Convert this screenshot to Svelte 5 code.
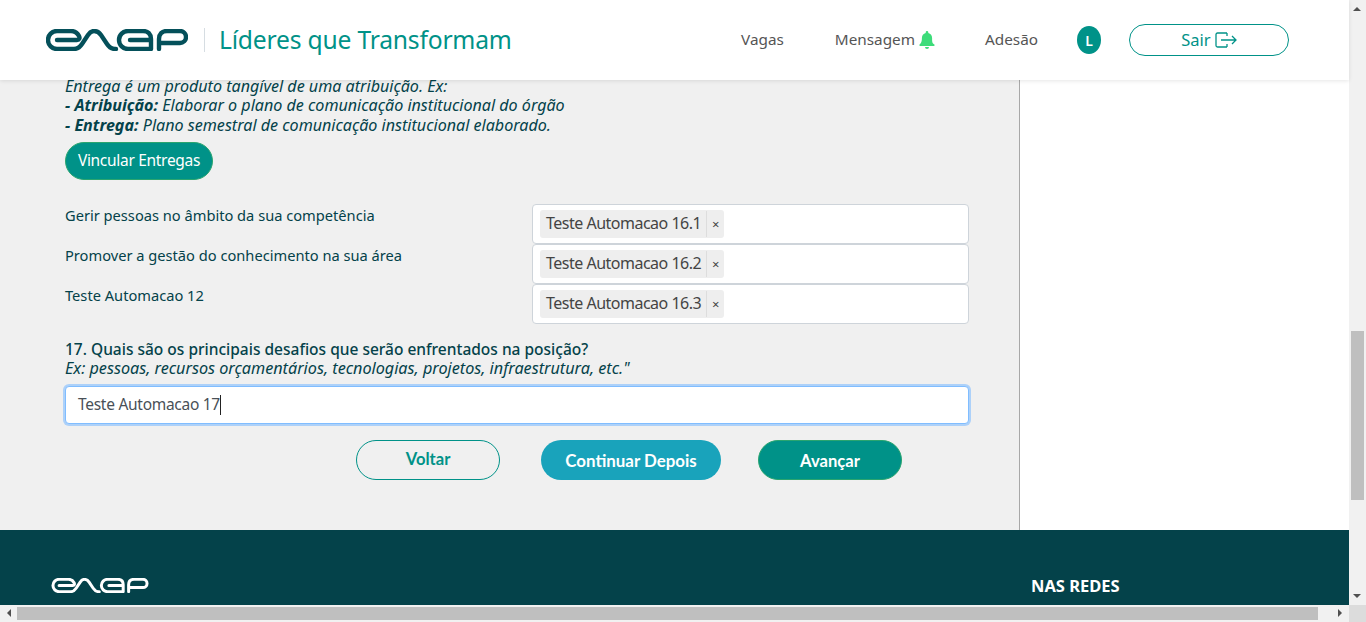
<script>
  const rows = [
    { label: 'Gerir pessoas no âmbito da sua competência', tag: 'Teste Automacao 16.1' },
    { label: 'Promover a gestão do conhecimento na sua área', tag: 'Teste Automacao 16.2' },
    { label: 'Teste Automacao 12', tag: 'Teste Automacao 16.3' }
  ];
</script>

{#snippet logo(cls)}
  <svg class={cls} viewBox="0 0 142 22" fill="none" stroke="currentColor" stroke-width="4.4" stroke-linecap="round" stroke-linejoin="round" aria-label="enap">
    <path d="M11 11H31c2.500 0 3-2 2-4c-1.500-3-4-5-8-5H11a9 9 0 0 0 0 18H28c4 0 6-2 8-5l6-9c2-3 3-4 6-4s5 1 7 4l6 9c2 3 4 5 8 5h1" />
    <path d="M84 11H104M105 20H82a9 9 0 0 1 0-18H97c5 0 8 3 8 8v10" />
    <path d="M113 20v-10c0-5 3-8 8-8H134a6 6 0 0 1 0 12H115" />
  </svg>
{/snippet}

<div class="page">
  <header class="topbar">
    <div class="brand">
      {@render logo('logo')}
      <span class="divider"></span>
      <span class="title">Líderes que Transformam</span>
    </div>
    <nav class="nav">
      <span class="nav-item vagas">Vagas</span>
      <span class="nav-item mensagem"><span class="shift">Mensagem</span>
        <svg class="bell" viewBox="0 0 16 18" aria-hidden="true"><path d="M8 0a1.3 1.3 0 0 0-1.3 1.3v.6C4.3 2.500 2.900 4.500 2.900 7c0 4-1 5.300-2.300 6.600-.5.5-.2 1.400.6 1.400h13.600c.8 0 1.100-.9.6-1.400C13.100 12.300 13.100 11 13.100 7c0-2.500-1.400-4.500-3.800-5.100v-.6A1.300 1.300 0 0 0 8 0zM6 16a2 2 0 0 0 4 0z" /></svg>
      </span>
      <span class="nav-item adesao">Adesão</span>
      <span class="avatar">L</span>
      <span class="exit"><span class="shift">Sair</span>
        <svg class="exit-icon" viewBox="0 0 22 16" aria-hidden="true"><path d="M12 1H2.500A1.500 1.500 0 0 0 1 2.500v11A1.500 1.500 0 0 0 2.500 15H12M12 1v3M12 15v-3M6 8h15M17 4l4 4-4 4" /></svg>
      </span>
    </nav>
  </header>

  <div class="body-row">
    <main class="content">
      <p class="hint">Entrega é um produto tangível de uma atribuição. Ex:<br />
        <b>- Atribuição:</b> Elaborar o plano de comunicação institucional do órgão<br />
        <b>- Entrega:</b> Plano semestral de comunicação institucional elaborado.</p>
      <button class="link-btn">Vincular Entregas</button>

      <div class="rows">
        {#each rows as r}
          <div class="row">
            <span class="row-label">{r.label}</span>
            <div class="select">
              <span class="chip"><span class="chip-text">{r.tag}</span><span class="chip-x">×</span></span>
            </div>
          </div>
        {/each}
      </div>

      <p class="question">17. Quais são os principais desafios que serão enfrentados na posição?</p>
      <p class="example">Ex: pessoas, recursos orçamentários, tecnologias, projetos, infraestrutura, etc."</p>
      <div class="answer"><span>Teste Automacao 17</span><span class="caret"></span></div>

      <div class="actions">
        <button class="act back">Voltar</button>
        <button class="act later">Continuar Depois</button>
        <button class="act next">Avançar</button>
      </div>
    </main>
    <aside class="side"></aside>
  </div>

  <footer class="footer">
    {@render logo('logo-small')}
    <span class="socials">NAS REDES</span>
  </footer>

  <div class="vscroll">
    <span class="arrow up"></span>
    <span class="vthumb"></span>
    <span class="arrow down"></span>
  </div>
  <div class="hscroll">
    <span class="arrow left"></span>
    <span class="hthumb"></span>
    <span class="arrow right"></span>
  </div>
  <div class="corner"></div>
</div>

<style>
  :global(body) { margin: 0; background: #fff; overflow: hidden; }
  .page {
    position: relative;
    width: 1366px;
    height: 622px;
    overflow: hidden;
    font-family: "Noto Sans", sans-serif;
    color: #04424a;
    --teal: #009288;
  }
  p { margin: 0; }
  button { font-family: inherit; cursor: pointer; }

  .topbar {
    position: absolute;
    top: 0; left: 0;
    width: 1349px;
    height: 80px;
    box-sizing: border-box;
    padding: 0 60px 0 46px;
    background: #fff;
    box-shadow: 0 1px 4px rgba(0,0,0,.1);
    display: flex;
    align-items: center;
    justify-content: space-between;
    z-index: 2;
  }
  .brand { display: flex; align-items: center; }
  .logo { width: 142px; height: 22px; color: #04505a; }
  .divider { width: 1px; height: 24px; background: #d6dde2; margin: 0 14px 0 16px; }
  .title { font-size: 24.65px; color: var(--teal); letter-spacing: -.2px; margin-bottom: 2px; }
  .nav { display: flex; align-items: center; color: #555; font-size: 15.3px; }
  .nav-item { white-space: nowrap; }
  .vagas, .adesao, .shift { margin-bottom: 2px; }
  .mensagem { margin-left: 51px; display: flex; align-items: center; gap: 4px; }
  .adesao { margin-left: 50px; }
  .bell { width: 16px; height: 18px; fill: #3ddc7a; }
  .avatar {
    width: 24px; height: 28px;
    margin-left: 39px;
    border-radius: 50%;
    background: var(--teal);
    color: #fff;
    font-size: 14px;
    font-weight: 600;
    display: flex; align-items: center; justify-content: center;
  }
  .exit {
    margin-left: 28px;
    width: 160px; height: 32px;
    box-sizing: border-box;
    border: 1px solid var(--teal);
    border-radius: 16px;
    color: var(--teal);
    font-size: 16.5px;
    display: flex; align-items: center; justify-content: center; gap: 4px;
  }
  .exit-icon { width: 22px; height: 16px; fill: none; stroke: var(--teal); stroke-width: 1.3; }

  .body-row { display: flex; height: 530px; }
  .content {
    box-sizing: border-box;
    padding: 76.5px 50px 0 65px;
    background: #f0f0f0;
    border-right: 1px solid #a8a8a8;
    width: 1020px;
  }
  .side { flex: 1; background: #fff; }

  .hint { font-size: 16.1px; line-height: 19.5px; font-style: italic; }
  .hint b { font-weight: 700; }
  .link-btn {
    display: block;
    margin-top: 7px;
    width: 148px; height: 38px;
    padding: 0 0 2px;
    border: 1px solid #2aa56f;
    border-radius: 19px;
    background: var(--teal);
    color: #fff;
    font-size: 15.5px;
    letter-spacing: -.3px;
  }
  .rows { margin-top: 24px; width: 904px; }
  .row { display: flex; height: 40px; }
  .row-label { width: 467px; font-size: 14.65px; line-height: 22px; }
  .select {
    flex: 1;
    box-sizing: border-box;
    background: #fff;
    border: 1px solid #ced4da;
    border-radius: 4px;
    padding: 5px 7px;
  }
  .chip {
    display: inline-flex;
    align-items: center;
    height: 28px;
    background: #eee;
    border-radius: 3px;
    color: #444;
  }
  .chip-text { font-size: 16px; letter-spacing: -.5px; padding: 0 5px 0 6px; height: 28px; line-height: 27px; }
  .chip-x { font-size: 13px; width: 17px; text-align: center; line-height: 26px; border-left: 1px solid #ddd; }

  .question { margin-top: 15.5px; font-size: 15.5px; line-height: 19.5px; font-weight: 500; }
  .example { font-size: 16.2px; line-height: 19.5px; font-style: italic; }
  .answer {
    margin-top: 7.5px;
    width: 904px; height: 38px;
    box-sizing: border-box;
    background: #fff;
    border: 1px solid #80bdff;
    border-radius: 4px;
    box-shadow: 0 0 0 2px rgba(128,189,255,.6);
    padding: 0 12px 2px;
    display: flex; align-items: center;
    font-size: 15.5px;
    letter-spacing: -.28px;
    color: #495057;
  }
  .caret { width: 1px; height: 20px; background: #222; margin-top: 2px; }

  .actions { display: flex; margin: 16px 0 0 291px; }
  .act {
    height: 40px;
    padding: 0;
    border-radius: 20px;
    font-family: Lato, sans-serif;
    font-size: 16.6px;
    font-weight: 700;
  }
  .back { width: 144px; background: transparent; border: 1px solid var(--teal); color: var(--teal); padding-bottom: 2px; }
  .later { width: 180px; margin-left: 41px; background: #19a3bb; border: 0; color: #fff; font-size: 16.9px; padding-top: 1px; }
  .next { width: 144px; margin-left: 37px; background: var(--teal); border: 1px solid #2aa56f; color: #fff; padding-top: 1px; }

  .footer {
    height: 92px;
    background: #04424a;
    color: #fff;
    position: relative;
    display: flex;
    align-items: flex-start;
    padding: 48px 0 0 51px;
    box-sizing: border-box;
  }
  .logo-small { width: 98px; height: 15px; color: #fff; }
  .socials { margin-left: 882px; margin-top: -2px; font-size: 16.5px; font-weight: 700; line-height: 20px; }

  .vscroll {
    position: absolute; right: 0; top: 0;
    width: 17px; height: 605px;
    background: #f1f1f1;
  }
  .vthumb { position: absolute; left: 2px; top: 331px; width: 13px; height: 169px; background: #bfbfbf; }
  .hscroll {
    position: absolute; left: 0; bottom: 0;
    width: 1349px; height: 17px;
    background: #f1f1f1;
  }
  .hthumb { position: absolute; left: 17px; top: 2px; width: 1301px; height: 13px; background: #bfbfbf; }
  .corner { position: absolute; right: 0; bottom: 0; width: 17px; height: 17px; background: #dcdcdc; }
  .arrow { position: absolute; width: 0; height: 0; border: 4px solid transparent; }
  .up { left: 4px; top: 3px; border-bottom: 4px solid #505050; }
  .down { left: 4px; bottom: 3px; border-top: 4px solid #505050; }
  .left { left: 3px; top: 4px; border-right: 4px solid #505050; }
  .right { right: 3px; top: 4px; border-left: 4px solid #505050; }
</style>
